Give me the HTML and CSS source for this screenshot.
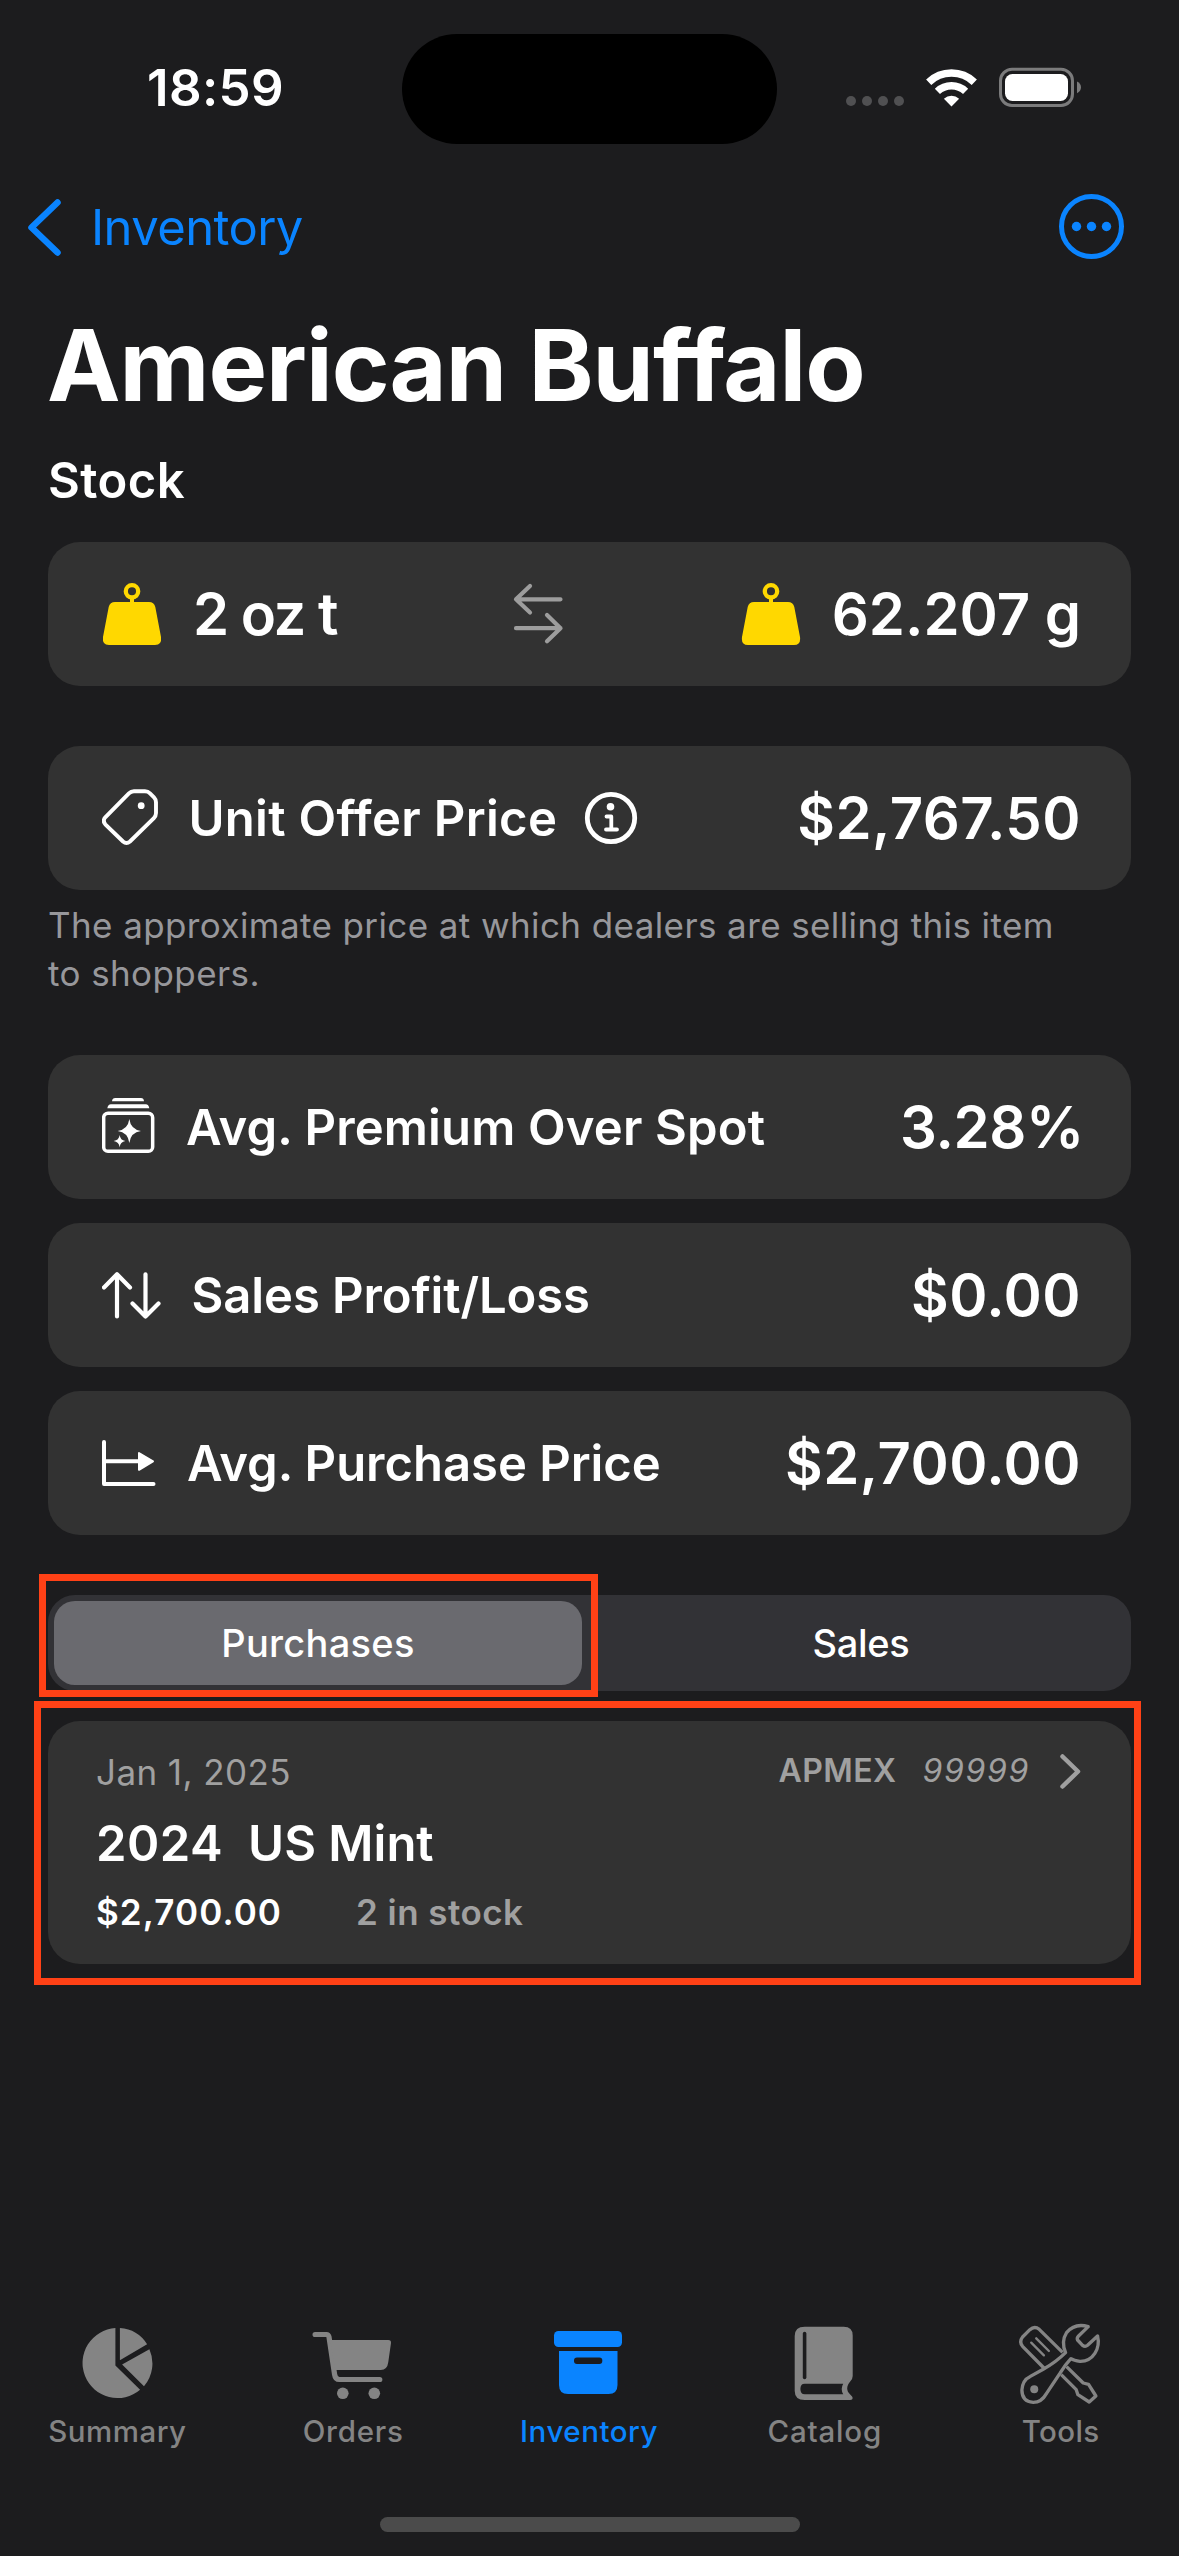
FILE: index.html
```html
<!DOCTYPE html>
<html lang="en">
<head>
<meta charset="utf-8">
<title>American Buffalo</title>
<link rel="stylesheet" href="styles.css">
</head>
<body>
<div class="screen">
  <header class="status">
    <span class="status-time">18:59</span>
    <span class="island"></span>
    <svg class="status-icons" viewBox="842 64 244 48" width="244" height="48">
      <g fill="#505052"><circle cx="851" cy="101" r="5"/><circle cx="867" cy="101" r="5"/><circle cx="883" cy="101" r="5"/><circle cx="899" cy="101" r="5"/></g>
      <g fill="none" stroke="#fff">
        <path d="M928.7 82.2A33 33 0 0 1 974.300 82.200" stroke-width="7.500"/>
        <path d="M937.400 91.400A20.500 20.500 0 0 1 965.600 91.400" stroke-width="7.500"/>
      </g>
      <path d="M951.500 106.500L943.900 98.700A11.500 11.500 0 0 1 959.100 98.700Z" fill="#fff"/>
      <rect x="1000.500" y="69.300" width="72" height="36.200" rx="11.500" fill="none" stroke="#7b7b7c" stroke-width="3"/>
      <rect x="1005" y="74" width="63" height="27" rx="7.500" fill="#fff"/>
      <path d="M1077 81.500Q1081 83.500 1081 87.300T1077 93.200Z" fill="#7b7b7c"/>
    </svg>
  </header>

  <nav class="nav">
    <a class="back">
      <svg viewBox="26 196 37 61" width="37" height="61"><path d="M57.500 201.500L31.500 226.500L57.500 251.500" fill="none" stroke="#0a84ff" stroke-width="6.500" stroke-linecap="round" stroke-linejoin="round"/></svg>
      <span>Inventory</span>
    </a>
    <svg viewBox="1058 193 68 68" width="68" height="68"><circle cx="1091.500" cy="226.500" r="30" fill="none" stroke="#0a84ff" stroke-width="5"/><g fill="#0a84ff"><circle cx="1076.500" cy="226.500" r="4.700"/><circle cx="1091.500" cy="226.500" r="4.700"/><circle cx="1106.500" cy="226.500" r="4.700"/></g></svg>
  </nav>

  <main class="content">
    <h1>American Buffalo</h1>
    <h2>Stock</h2>

    <section class="card weights">
      <div class="cell">
        <svg viewBox="102 580 61 68" width="61" height="68"><circle cx="132" cy="591.300" r="6.200" fill="none" stroke="#ffd800" stroke-width="4.300"/><path d="M130 598H134V602H149Q154 602 155.300 607L161 637Q162 645 155 645H109Q102 645 103 637L108.700 607Q110 602 115 602H130Z" fill="#ffd800"/></svg>
        <span class="value tight">2 oz t</span>
      </div>
      <svg viewBox="513 580 51 68" width="51" height="68"><path d="M530 586L516 599.300L530 612.500M516 599.300H560.500M547 615L560.500 628.200L547 641.300M516 628.200H560.500" fill="none" stroke="#9d9d9d" stroke-width="4.200" stroke-linecap="round" stroke-linejoin="round"/></svg>
      <div class="cell">
        <svg viewBox="102 580 61 68" width="61" height="68"><circle cx="132" cy="591.300" r="6.200" fill="none" stroke="#ffd800" stroke-width="4.300"/><path d="M130 598H134V602H149Q154 602 155.300 607L161 637Q162 645 155 645H109Q102 645 103 637L108.700 607Q110 602 115 602H130Z" fill="#ffd800"/></svg>
        <span class="value plain">62.207 g</span>
      </div>
    </section>

    <section class="card offer">
      <div class="cell">
        <svg viewBox="102 784 56.400 68" width="56.4" height="68"><path d="M134 791.300H145Q148 791.300 150 793.300L154 797.300Q156 799.300 156 802.300V813Q156 816 153.900 818.100L130 841.500Q126.500 844.500 123 841.500L105.300 824.300Q102.300 820.800 105.300 817.300L128.900 793.400Q131 791.300 134 791.300Z" fill="none" stroke="#fff" stroke-width="3.900"/><circle cx="141.200" cy="805.700" r="3.400" fill="#fff"/></svg>
        <span class="label offer-label">Unit Offer Price</span>
        <svg class="info" viewBox="584 791 54 54" width="54" height="54"><circle cx="611" cy="818" r="23.700" fill="none" stroke="#fff" stroke-width="4.800"/><circle cx="610.500" cy="806.800" r="3.800" fill="#fff"/><path d="M606.500 816.500H611.300V829.500M606 829.500H617" fill="none" stroke="#fff" stroke-width="3.800" stroke-linecap="round" stroke-linejoin="round"/></svg>
      </div>
      <span class="value">$2,767.50</span>
    </section>
    <p class="caption">The approximate price at which dealers are selling this item<br>to shoppers.</p>

    <div class="stats">
      <section class="card">
        <div class="cell">
          <svg viewBox="102 1093 54 68" width="54" height="68"><g transform="translate(90 1085) scale(.3333)"><rect x="41" y="85" width="147" height="114" rx="13" fill="none" stroke="#fff" stroke-width="10.500"/><path d="M66 49Q67 39 76 39H153Q161 39 162 49ZM52 70Q54 58 63 58H167Q176 58 178 70Z" fill="#fff"/><path d="M118 102Q122 133 153 138Q122 142 118 174Q114 142 83 138Q114 133 118 102ZM89 150Q91 166 106 168Q91 170 89 187Q87 170 71 168Q87 166 89 150Z" fill="#fff"/></g></svg>
          <span class="label premium-label">Avg. Premium Over Spot</span>
        </div>
        <span class="value percent">3.28%</span>
      </section>
      <section class="card">
        <div class="cell">
          <svg viewBox="102 1261 59.600 68" width="59.6" height="68"><path d="M104 1287.500L117 1274.300L130 1287.500M117 1274.300V1316.500M145.500 1274.300V1316.500M132.500 1303.500L145.500 1316.500L158.500 1303.500" fill="none" stroke="#fff" stroke-width="4.200" stroke-linecap="round" stroke-linejoin="round"/></svg>
          <span class="label sales-label">Sales Profit/Loss</span>
        </div>
        <span class="value">$0.00</span>
      </section>
      <section class="card">
        <div class="cell">
          <svg viewBox="102 1429 55 68" width="55" height="68"><path d="M104 1442V1484H153.500" fill="none" stroke="#fff" stroke-width="4" stroke-linecap="round" stroke-linejoin="round"/><path d="M104 1461.300H140" stroke="#fff" stroke-width="4"/><path d="M139 1453L153 1461.300L139 1469.800Z" fill="#fff" stroke="#fff" stroke-width="2" stroke-linejoin="round"/></svg>
          <span class="label purchase-label">Avg. Purchase Price</span>
        </div>
        <span class="value">$2,700.00</span>
      </section>
    </div>

    <div class="segmented">
      <span class="segment selected">Purchases</span>
      <span class="segment sales">Sales</span>
      <i class="mark mark-tab"></i>
    </div>

    <article class="card lot">
      <div class="lot-head">
        <span class="date">Jan 1, 2025</span>
        <span class="dealer">APMEX</span>
        <em>99999</em>
        <svg viewBox="1058 1750 25 44" width="25" height="44"><path d="M1062.500 1756.500L1078 1771.500L1062.500 1786.500" fill="none" stroke="#a0a0a0" stroke-width="4.500" stroke-linecap="round" stroke-linejoin="round"/></svg>
      </div>
      <div class="lot-title"><span class="year">2024</span><span>US Mint</span></div>
      <div class="lot-foot"><span class="cost">$2,700.00</span><span class="left">2 in stock</span></div>
      <i class="mark mark-lot"></i>
    </article>
  </main>

  <footer class="tabs">
    <a class="tab">
      <svg viewBox="67.900 2320 100 90" width="100" height="90"><path fill="#848484" d="M115.300 2328.100V2365.500L140 2389.800A35 35 0 1 1 115.300 2328.100ZM119.800 2328.100A35 35 0 0 1 147 2344.300L119.800 2360.300ZM149.300 2349.300A35 35 0 0 1 143.900 2386.300L122 2364.500Z"/></svg>
      <span class="t1">Summary</span>
    </a>
    <a class="tab">
      <svg viewBox="303.700 2320 100 90" width="100" height="90"><path d="M314.800 2334.500H326Q328.300 2334.500 328.700 2337L334.300 2374.500Q335 2379.500 339 2379.500H379.500" fill="none" stroke="#848484" stroke-width="5.200" stroke-linecap="round" stroke-linejoin="round"/><path fill="#848484" d="M330 2340H388Q391 2340 390.700 2343L388 2362Q387 2370 380.500 2370H335Z"/><circle cx="342.500" cy="2393.300" r="5.800" fill="#848484"/><circle cx="374" cy="2393.300" r="5.800" fill="#848484"/></svg>
      <span class="t2">Orders</span>
    </a>
    <a class="tab active">
      <svg viewBox="539 2320 100 90" width="100" height="90"><rect x="554" y="2331" width="68" height="16" rx="4.500" fill="#0a84ff"/><path fill="#0a84ff" d="M559 2351H617.500V2385Q617.500 2394 608.500 2394H568Q559 2394 559 2385Z"/><rect x="574" y="2357.600" width="28.300" height="6.400" rx="3" fill="#1c1c1e"/></svg>
      <span class="t3">Inventory</span>
    </a>
    <a class="tab">
      <svg viewBox="775.300 2320 100 90" width="100" height="90"><path fill="#848484" fill-rule="evenodd" d="M805 2326.700H844Q853 2326.700 853 2335.500V2376Q853 2379 850.500 2381.500C846.500 2386 846.500 2391 850.500 2394.500Q853 2396.500 853 2398Q853 2400 850.500 2400H805Q795 2400 795 2391V2336Q795 2326.700 805 2326.700ZM805 2383.800Q800.700 2383.800 800.700 2389T805 2394.300H843.500Q840.500 2389 843.500 2383.800Z"/><path d="M804.900 2333.500V2377.500" stroke="#1c1c1e" stroke-width="3.600" stroke-linecap="round"/></svg>
      <span class="t4">Catalog</span>
    </a>
    <a class="tab">
      <svg viewBox="1011.100 2320 100 90" width="100" height="90"><g transform="translate(1000 2310) scale(.3333)" fill="none" stroke="#848484" stroke-width="10" stroke-linejoin="round"><path d="M132 174L68 109Q57 95 68 81L90 59Q104 46 118 58L188 127"/><path d="M94 98L132 136M109 85L147 123" stroke-width="7" stroke-linecap="round"/><path d="M265 50L236 78Q230 84 233 90L248 106Q256 112 263 106L293 78C302 115 280 155 240 154Q222 152 213 146Q195 165 180 190L140 250Q125 277 100 277Q66 275 66 240Q68 210 90 200L130 178Q170 155 197 128Q183 95 200 68Q225 38 265 50Z"/><path d="M200 170L250 219L266 223L288 258L268 276L234 254L229 239L184 194"/><circle cx="103" cy="238" r="12" fill="#848484" stroke="none"/></g></svg>
      <span class="t5">Tools</span>
    </a>
  </footer>
  <div class="home-indicator"></div>
</div>
</body>
</html>
```
FILE: styles.css
```css
* { box-sizing: border-box; margin: 0; padding: 0; }

body {
  background: #1c1c1e;
  color: #fff;
  font-family: Inter, "Liberation Sans", sans-serif;
}

svg { display: block; flex: none; }

.screen {
  width: 1179px;
  height: 2556px;
  display: flex;
  flex-direction: column;
  overflow: hidden;
}

.status {
  display: grid;
  grid-template-columns: 402px 375px 402px;
  align-items: center;
  height: 176px;
}
.status-time {
  padding-left: 147px;
  font-size: 51px;
  font-weight: 600;
  line-height: 60px;
  letter-spacing: .36px;
}
.island {
  height: 110px;
  margin-top: 2px;
  border-radius: 55px;
  background: #000;
}
.status-icons { margin-left: 65px; }

.nav {
  height: 102px;
  padding: 0 53px 0 26px;
  display: flex;
  align-items: center;
  justify-content: space-between;
}
.back {
  display: flex;
  align-items: center;
  gap: 28px;
  color: #0a84ff;
  font-size: 49px;
  line-height: 60px;
  letter-spacing: -.6px;
}
.back span { padding-top: 2px; }

.content { padding: 27px 48px 0; }

h1 {
  margin-left: -1px;
  padding-top: 1px;
  font-size: 98.5px;
  font-weight: 700;
  line-height: 120px;
  letter-spacing: -1px;
}
h2 {
  margin: 25px 0 31px;
  font-size: 49px;
  font-weight: 600;
  line-height: 60px;
  letter-spacing: .4px;
}

.card {
  height: 144px;
  padding: 0 50px 0 54px;
  border-radius: 32px;
  background: #323232;
  display: flex;
  align-items: center;
  justify-content: space-between;
}
.cell {
  display: flex;
  align-items: center;
  gap: 30px;
}
.label {
  padding-top: 2px;
  font-size: 49px;
  font-weight: 600;
  line-height: 60px;
  white-space: nowrap;
}
.offer-label { letter-spacing: .32px; }
.premium-label { letter-spacing: .14px; }
.sales-label { letter-spacing: -.12px; }
.purchase-label { letter-spacing: -.04px; }
.value {
  font-size: 58px;
  font-weight: 600;
  line-height: 70px;
  letter-spacing: .45px;
  white-space: nowrap;
}
.tight { letter-spacing: -1.49px; }
.plain { letter-spacing: 0; }
.percent { letter-spacing: -.35px; margin-right: -3px; }
.info { margin-left: -3px; }

.offer { margin-top: 60px; }
.caption {
  margin: 11px 0 58px;
  color: #97979b;
  font-size: 35px;
  line-height: 48px;
  letter-spacing: .4px;
}

.stats { display: grid; gap: 24px; }

.segmented {
  position: relative;
  height: 96px;
  margin: 60px 0 30px;
  padding: 6px;
  border-radius: 27px;
  background: #323236;
  display: grid;
  grid-template-columns: 528px 1fr;
  gap: 15px;
}
.segment {
  font-size: 38px;
  font-weight: 500;
  line-height: 84px;
  text-align: center;
}
.selected {
  border-radius: 21px;
  background: #6a6a6f;
  letter-spacing: .3px;
}
.sales { letter-spacing: -.3px; }

/* Call-out frames drawn over the interface */
.mark {
  position: absolute;
  border: 7px solid #ff4116;
}
.mark-tab { left: -9px; top: -21px; width: 559px; height: 123px; }
.mark-lot { left: -14px; top: -20px; width: 1107px; height: 284px; }

.lot {
  position: relative;
  display: block;
  height: 243px;
  padding: 29px 48px 0;
  color: #a0a0a0;
}
.lot-head {
  display: flex;
  align-items: center;
  height: 44px;
  font-size: 35px;
  line-height: 44px;
}
.date { margin-right: auto; letter-spacing: .42px; }
.dealer, .lot-head em { font-size: 32px; margin-top: -3px; }
.dealer { font-weight: 600; letter-spacing: .4px; }
.lot-head em { margin: -3px 28px 0 26px; letter-spacing: 1.7px; }
.lot-title {
  display: flex;
  gap: 25px;
  margin: 20px 0 16px;
  color: #fff;
  font-size: 49px;
  font-weight: 600;
  line-height: 60px;
}
.year { letter-spacing: .46px; }
.lot-foot {
  display: flex;
  gap: 74px;
  font-size: 35px;
  font-weight: 600;
  line-height: 44px;
}
.cost { color: #fff; letter-spacing: 1.1px; }
.left { letter-spacing: .45px; }

.tabs {
  display: grid;
  grid-template-columns: repeat(5, 1fr);
  margin-top: auto;
  padding-bottom: 68px;
}
.tab {
  display: flex;
  flex-direction: column;
  align-items: center;
  gap: 3px;
  color: #848484;
  font-size: 29.5px;
  font-weight: 500;
  line-height: 36px;
}
.tab span { margin-left: -1px; }
.active { color: #0a84ff; }
.t1 { letter-spacing: .5px; }
.t2 { letter-spacing: .77px; }
.t3 { letter-spacing: .52px; }
.t4 { letter-spacing: .82px; }
.t5 { letter-spacing: .32px; }

.home-indicator {
  flex: none;
  width: 420px;
  height: 15px;
  margin: 0 auto 24px;
  border-radius: 8px;
  background: #4b4b4b;
}
```
